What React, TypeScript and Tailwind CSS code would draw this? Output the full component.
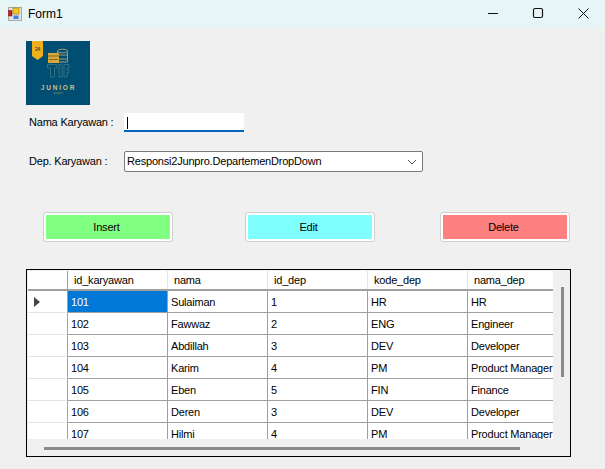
import React from "react";

const rows = [
  ["101", "Sulaiman", "1", "HR", "HR"],
  ["102", "Fawwaz", "2", "ENG", "Engineer"],
  ["103", "Abdillah", "3", "DEV", "Developer"],
  ["104", "Karim", "4", "PM", "Product Manager"],
  ["105", "Eben", "5", "FIN", "Finance"],
  ["106", "Deren", "3", "DEV", "Developer"],
  ["107", "Hilmi", "4", "PM", "Product Manager"],
];
const headers = ["id_karyawan", "nama", "id_dep", "kode_dep", "nama_dep"];

function FormIcon() {
  return (
    <svg width="14" height="14" viewBox="0 0 14 14" className="shrink-0">
      <rect x="0.5" y="0.5" width="13" height="13" fill="#e4e4e4" stroke="#a8a8a8" />
      <rect x="0.5" y="3.500" width="3.500" height="5.500" fill="#c02020" stroke="#801010" strokeWidth="0.5" />
      <rect x="5" y="1" width="6" height="6" fill="#f8c820" stroke="#b08010" strokeWidth="0.7" />
      <rect x="5.500" y="8.500" width="5" height="3.500" fill="#4080e0" />
    </svg>
  );
}

function Logo() {
  return (
    <svg width="64" height="64" viewBox="0 0 64 64" className="block">
      <rect width="64" height="64" fill="#004e71" />
      <path d="M6 0H17V15L11.500 19L6 15Z" fill="#efb01c" />
      <text x="11.500" y="9.500" fontSize="5" fontWeight="700" textAnchor="middle" fill="#4a4a30" fontFamily="Liberation Sans">24</text>
      <ellipse cx="36.500" cy="10" rx="5" ry="1.800" fill="none" stroke="#9c9c78" strokeWidth="1" />
      <path d="M31.500 10V21H41.500V10M31.500 14H41.500M31.500 18H41.500" fill="none" stroke="#9c9c78" strokeWidth="1" />
      <rect x="22" y="12" width="11" height="10" fill="#d8a838" />
      <path d="M22 15H33M23 18.500H32" stroke="#6a5a28" strokeWidth="0.8" />
      <path d="M21.500 23.500H31V27H28.500V36H24.500V27H21.500ZM33 23.500H36V36H33ZM38 23.500H43V27H41V29H43V31.500H41V36H38Z" fill="none" stroke="#2f7185" strokeWidth="1" />
      <text x="32.500" y="49" fontSize="6.500" fontWeight="700" letterSpacing="1.800" textAnchor="middle" fill="#cfc088" fontFamily="Liberation Sans">JUNIOR</text>
      <text x="32" y="53" fontSize="3.500" textAnchor="middle" fill="#7a8a70" fontFamily="Liberation Sans">project</text>
    </svg>
  );
}

function Btn({ label, bg, className }: { label: string; bg: string; className?: string }) {
  return (
    <div className={`w-[130px] h-[30px] rounded-[3px] border border-[#cfcfcf] bg-white p-[2px] ${className ?? ""}`}>
      <div className={`h-full flex items-center justify-center pr-[3px] ${bg}`}>{label}</div>
    </div>
  );
}

export default function App() {
  return (
    <div className="w-[605px] h-[469px] bg-[#f0f0f0] flex flex-col overflow-hidden text-[11px] tracking-[-0.2px] text-black" style={{ fontFamily: '"Liberation Sans", sans-serif' }}>
      <div className="h-[28px] shrink-0 bg-[#e8f5f7] flex items-center pl-[8px]">
        <FormIcon />
        <span className="ml-[6px] text-[12px] tracking-normal">Form1</span>
        <div className="ml-auto flex items-center h-full">
          <svg width="46" height="28" viewBox="0 0 46 28"><path d="M21 13.500H31" stroke="#111" strokeWidth="1" /></svg>
          <svg width="46" height="28" viewBox="0 0 46 28"><rect x="20.500" y="8.500" width="9" height="9" rx="1.500" fill="none" stroke="#111" strokeWidth="1.200" /></svg>
          <svg width="46" height="28" viewBox="0 0 46 28"><path d="M19.500 8.500L29.500 18.500M29.500 8.500L19.500 18.500" stroke="#111" strokeWidth="1" /></svg>
        </div>
      </div>

      <div className="flex-1 flex flex-col pl-[26px] pt-[13px]">
        <Logo />

        <div className="flex items-center mt-[8px] h-[19px]">
          <span className="w-[98px] pl-[3px] whitespace-nowrap">Nama Karyawan :</span>
          <div className="w-[120px] h-[19px] bg-white border-b-2 border-[#0067c0] pl-[3px] pt-[4px]">
            <div className="w-px h-[12px] bg-black" />
          </div>
        </div>

        <div className="flex items-center mt-[19px] h-[21px]">
          <span className="w-[98px] pl-[3px] whitespace-nowrap">Dep. Karyawan :</span>
          <div className="w-[299px] h-[21px] bg-white border border-[#7a7a7a] rounded-[2px] flex items-center pl-[2px] pr-[4px]">
            <span className="flex-1">Responsi2Junpro.DepartemenDropDown</span>
            <svg width="12" height="12" viewBox="0 0 12 12"><path d="M2 4L6 8L10 4" fill="none" stroke="#555" strokeWidth="1" /></svg>
          </div>
        </div>

        <div className="flex mt-[40px] ml-[17px]">
          <Btn label="Insert" bg="bg-[#80ff80]" />
          <Btn label="Edit" bg="bg-[#80ffff]" className="ml-[72px]" />
          <Btn label="Delete" bg="bg-[#ff8080]" className="ml-[65px]" />
        </div>

        <div className="mt-[27px] w-[545px] h-[188px] border border-black relative overflow-hidden">
          <div className="w-[525px] h-[168px] ml-px mt-px overflow-hidden bg-white">
            <div className="flex h-[20px] border-b-2 border-[#a0a0a0]">
              <div className="w-[40px] shrink-0 border-r border-[#a0a0a0]" />
              {headers.map((h) => (
                <div key={h} className="w-[100px] shrink-0 pl-[6px] pt-px flex items-center border-r border-[#e4e4e4]">{h}</div>
              ))}
            </div>
            {rows.map((r, i) => (
              <div key={r[0]} className="flex h-[22px]">
                <div className="w-[40px] shrink-0 border-r border-b border-r-[#a0a0a0] border-b-[#e4e4e4] flex items-center pl-[6px]">
                  {i === 0 && <svg width="6" height="10" viewBox="0 0 6 10"><path d="M0 0L6 5L0 10Z" fill="#444" /></svg>}
                </div>
                {r.map((c, j) => (
                  <div key={j} className={`w-[100px] shrink-0 pl-[3px] pt-px flex items-center border-r border-b border-[#a0a0a0] ${i === 0 && j === 0 ? "bg-[#0078d7] text-white" : ""}`}>
                    <span className="whitespace-nowrap">{c}</span>
                  </div>
                ))}
              </div>
            ))}
          </div>
          <div className="absolute left-[17px] top-[177px] w-[476px] h-[3px] bg-[#8a8a8a]" />
          <div className="absolute left-[534px] top-[17px] w-[3px] h-[90px] bg-[#8a8a8a]" />
        </div>
      </div>
    </div>
  );
}
